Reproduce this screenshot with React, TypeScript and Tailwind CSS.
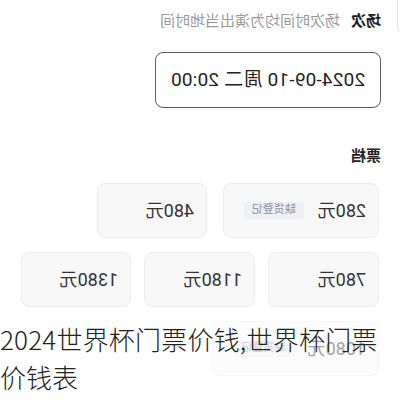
import React from 'react';

const font = { fontFamily: '"Roboto", "Noto Sans CJK SC", sans-serif' };

interface TierProps {
  price: string;
  width: string;
  soldOut?: boolean;
}

const Tier: React.FC<TierProps> = ({ price, width, soldOut }) => (
  <div className={`${width} h-[55px] flex items-center gap-[14px] px-3 rounded-lg border border-[#ededed] bg-[#f8f8f9]`}>
    <span className="text-[18px] text-[#333]">{price}</span>
    {soldOut && (
      <span className="h-[17px] px-2 flex items-center rounded-[3px] bg-[#edf0f4] text-[11px] text-[#8c9099]">
        缺货登记
      </span>
    )}
  </div>
);

export default function App() {
  return (
    <div className="relative w-[400px] h-[400px] overflow-hidden bg-white" style={font}>
      {/* the screenshot is mirrored */}
      <div className="relative h-full -scale-x-100">
        <div className="absolute -left-[6px] -top-[10px] w-[9px] h-[42px] rounded-md border border-[#e4e4e4]" />

        <div className="pl-[19px] pt-[12px]">
          <div className="flex items-center gap-[11px] h-[19px] text-[15px] leading-none">
            <span className="font-semibold text-[#222]">场次</span>
            <span className="text-[#9a9a9a]">场次时间均为演出当地时间</span>
          </div>

          <div className="mt-[21px] w-[226px] h-[56px] flex items-center justify-center rounded-lg border-[1.5px] border-[#5c5c5c] text-[19px] tracking-[0.2px] text-[#222]">
            2024-09-10 周二 20:00
          </div>

          <div className="mt-[39px] h-[18px] flex items-center text-[15px] font-semibold text-[#222]">票档</div>

          <div className="mt-[18px] pl-[2px] flex flex-col gap-[14px]">
            <div className="flex gap-4">
              <Tier price="280元" width="w-[156px]" soldOut />
              <Tier price="480元" width="w-[110px]" />
            </div>
            <div className="flex gap-[13px]">
              <Tier price="780元" width="w-[111px]" />
              <Tier price="1180元" width="w-[111px]" />
              <Tier price="1380元" width="w-[110px]" />
            </div>
            <div className="flex">
              <Tier price="1080元" width="w-[167px]" soldOut />
            </div>
          </div>
        </div>
      </div>

      <div
        className="absolute left-0 right-0 top-[316px] bottom-0 bg-white/55 pt-[4px] text-[26px] leading-[38px] font-light text-[#222]"
        style={{ fontFamily: '"Noto Sans CJK SC", sans-serif' }}
      >
        <div className="whitespace-nowrap tracking-[0.2px]">2024世界杯门票价钱,世界杯门票</div>
        <div>价钱表</div>
      </div>
    </div>
  );
}
